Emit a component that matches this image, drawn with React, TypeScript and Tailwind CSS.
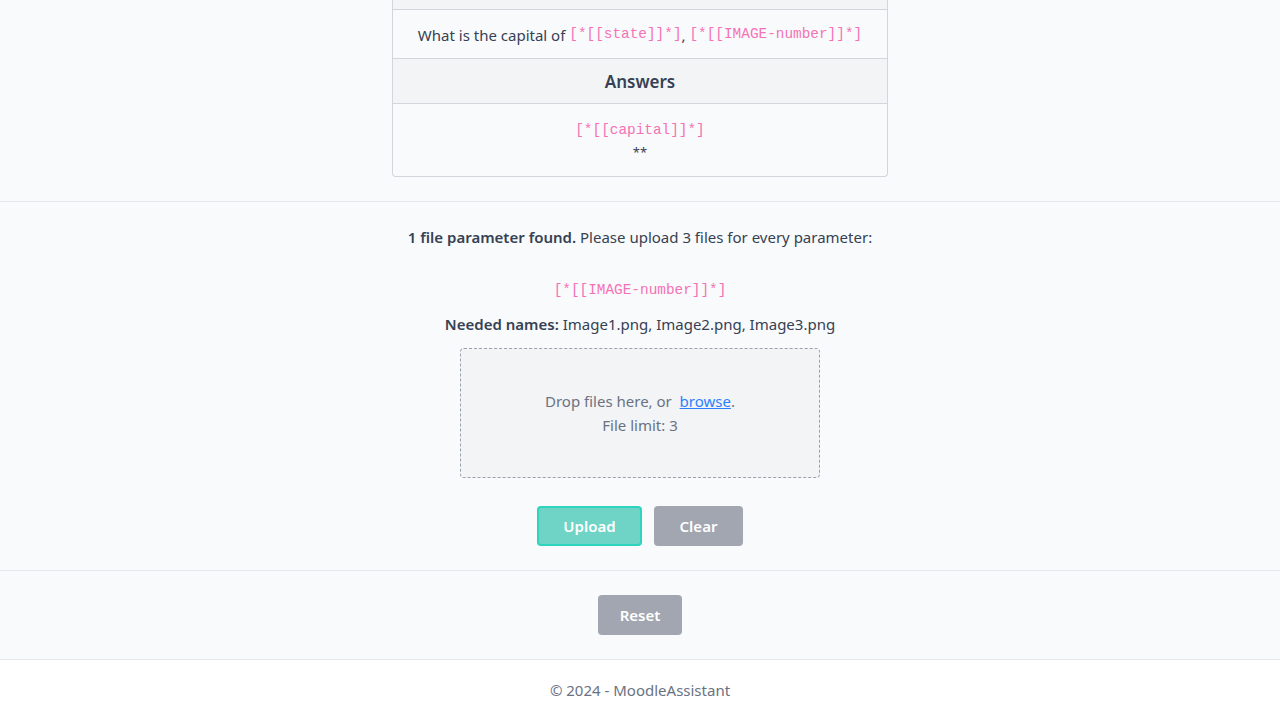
import React from 'react';

const mono = "font-['Liberation_Mono','Courier_New',monospace]";

export default function App() {
  return (
    <div className="min-h-screen bg-gray-50 text-gray-700 font-['Noto_Sans','Open_Sans',sans-serif]">
      <section className="pb-6">
        <div className="mx-auto w-[496px] bg-gray-50 border border-t-0 border-gray-300 rounded-b">
          <div className="h-[10px] bg-gray-100 border-b border-gray-300" />
          <div className="h-[49px] flex items-center justify-center border-b border-gray-300 text-[15px] pt-[2px]">
            <span>What is the capital of&nbsp;</span>
            <span className={`${mono} text-[14.4px] text-[#f472b6]`}>[*[[state]]*]</span>
            <span>,&nbsp;</span>
            <span className={`${mono} text-[14.4px] text-[#f472b6]`}>[*[[IMAGE-number]]*]</span>
          </div>
          <div className="h-[45px] flex items-center justify-center bg-gray-100 border-b border-gray-300 text-[17px] font-semibold pt-[2px]">
            Answers
          </div>
          <div className="h-[72px] flex flex-col items-center pt-[15px]">
            <span className={`${mono} text-[14.4px] leading-[22px] text-[#f472b6]`}>[*[[capital]]*]</span>
            <span className="text-[13px] leading-[22px]">**</span>
          </div>
        </div>
      </section>

      <section className="border-t border-gray-200 flex flex-col items-center pt-[23px] pb-6 text-[15px]">
        <p className="leading-[24px]">
          <span className="font-semibold">1 file parameter found.</span> Please upload 3 files for every parameter:
        </p>
        <p className={`${mono} text-[14.4px] text-[#f472b6] mt-[30px] leading-[22px]`}>[*[[IMAGE-number]]*]</p>
        <p className="mt-[11px] leading-[24px]">
          <span className="font-semibold">Needed names:</span> Image1.png, Image2.png, Image3.png
        </p>
        <div className="mt-[12px] w-[360px] h-[130px] border border-dashed border-gray-400 rounded bg-gray-100 flex flex-col items-center justify-center text-gray-500 leading-[24px]">
          <p>
            Drop files here, or&nbsp;{' '}
            <a className="text-blue-500 underline cursor-pointer">browse</a>.
          </p>
          <p>File limit: 3</p>
        </div>
        <div className="mt-7 flex gap-3">
          <button className="w-[105px] h-10 rounded bg-[#6fd3c5] border-2 border-[#2dd4bf] text-white font-semibold">Upload</button>
          <button className="w-[89px] h-10 rounded bg-[#a2a6b0] text-white font-semibold">Clear</button>
        </div>
      </section>

      <section className="border-t border-gray-200 flex justify-center pt-6 pb-6">
        <button className="w-[84px] h-10 rounded bg-[#a2a6b0] text-white font-semibold text-[15px]">Reset</button>
      </section>

      <footer className="border-t border-gray-200 bg-white h-[61px] flex items-center justify-center text-gray-500 text-[15px]">
        © 2024 - MoodleAssistant
      </footer>
    </div>
  );
}
